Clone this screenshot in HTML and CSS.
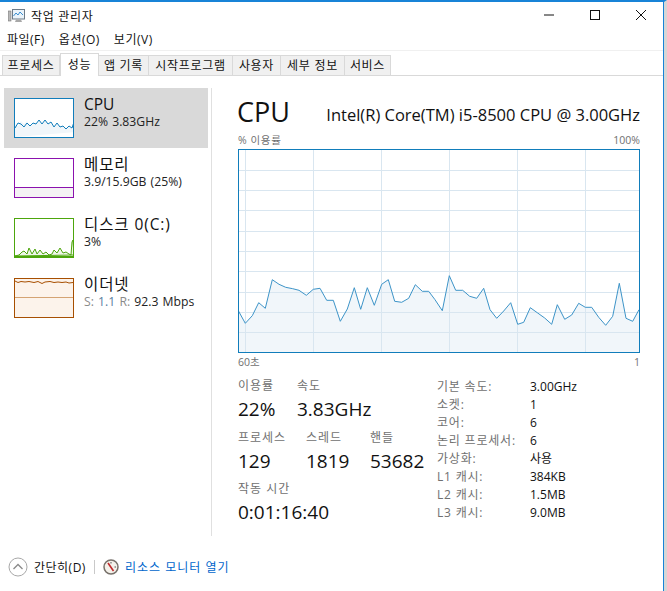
FILE: index.html
```html
<!DOCTYPE html>
<html lang="ko">
<head>
<meta charset="utf-8">
<title>작업 관리자</title>
<link rel="stylesheet" href="styles.css">
</head>
<body>
<div class="window">
  <header class="titlebar">
    <svg class="app-icon" width="17" height="16" viewBox="0 0 17 16">
      <rect x="0.5" y="3" width="2.5" height="10" fill="#b9b9b9" stroke="#777" stroke-width="0.6"/>
      <rect x="4.5" y="1.5" width="12" height="9.5" fill="#eaf3fa" stroke="#6d7b88"/>
      <path d="M5.5 8l2.5-3 2 2 2-3 3 3" fill="none" stroke="#3a8ed0"/>
      <path d="M8 11.5h5l1 2.5H7z" fill="#a8a8a8"/>
    </svg>
    <span class="title">작업 관리자</span>
    <div class="controls">
      <svg class="ctl" width="46" height="30" viewBox="0 0 46 30"><path d="M18 15h10" stroke="#111" fill="none"/></svg>
      <svg class="ctl" width="46" height="30" viewBox="0 0 46 30"><rect x="18.500" y="10.500" width="9" height="9" stroke="#111" fill="none"/></svg>
      <svg class="ctl" width="46" height="30" viewBox="0 0 46 30"><path d="M18 10l10 10M28 10l-10 10" stroke="#111" fill="none"/></svg>
    </div>
  </header>
  <nav class="menu">
    <span>파일(F)</span><span>옵션(O)</span><span>보기(V)</span>
  </nav>
  <div class="tabs">
    <span class="tab t1">프로세스</span>
    <span class="tab active t2">성능</span>
    <span class="tab t3">앱 기록</span>
    <span class="tab t4">시작프로그램</span>
    <span class="tab t5">사용자</span>
    <span class="tab t6">세부 정보</span>
    <span class="tab t7">서비스</span>
  </div>
  <main class="main">
    <aside class="sidebar">
      <div class="item selected">
        <svg class="mini cpu" width="60" height="40" viewBox="1 1 58 38">
          <path d="M1 39V27l3 1 3-5 3 3 3-3 3 5 3-3 3 1 3-4 3 4 3-4 3 4 3-2 3 5 3-4 3 4 3-1 3 3 3-3 3 2 3-8 1 12z" fill="#f1f6fa"/>
          <path d="M1 30l3-5 3 1 3 3 3-4 3 3 3-3 3 1 3-4 3 4 3-4 3 4 3-2 3 5 3-4 3 4 3-1 3 3 3-3 3 2 3-9 1 13" fill="none" stroke="#117dbb"/>
        </svg>
        <div class="info"><div class="name">CPU</div><div class="sub">22% 3.83GHz</div></div>
      </div>
      <div class="item">
        <svg class="mini mem" width="60" height="40" viewBox="1 1 58 38">
          <rect x="1" y="30" width="58" height="9" fill="#f4f2f4"/>
          <path d="M1 29.500h58" stroke="#8b12ae" fill="none"/>
        </svg>
        <div class="info"><div class="name ko">메모리</div><div class="sub">3.9/15.9GB (25%)</div></div>
      </div>
      <div class="item">
        <svg class="mini disk" width="60" height="40" viewBox="1 1 58 38">
          <path d="M1 38l4-1 3-3 2-1 3 3 2-6 3 6 3-5 2 5 3-4 3 4 3-2 3 3 3-1 2-4 3 3 3-5 3 5 3-1 3 2 2 1 1-13 1-2 1 15z" fill="#eef6e8" stroke="#4da60c"/>
          <path d="M1 38.500h58" stroke="#4da60c" fill="none"/>
        </svg>
        <div class="info"><div class="name ko">디스크 0(C:)</div><div class="sub">3%</div></div>
      </div>
      <div class="item">
        <svg class="mini net" width="60" height="40" viewBox="1 1 58 38">
          <rect x="1" y="1" width="58" height="38" fill="#fcf3eb"/>
          <path d="M1 19.500h58" stroke="#d4a373" fill="none"/>
          <path d="M1 3l3 1.500 3-1 4 .5 4-.5 5 1 4-1 4 2 3-1.500 5-.5 4 1 4-.5 4 .5 4-.5 3 1 4-.5" fill="none" stroke="#a74f01"/>
        </svg>
        <div class="info"><div class="name ko">이더넷</div><div class="sub"><span class="dim">S:</span> <span class="blueish">1.1</span> <span class="dim">R:</span> 92.3 Mbps</div></div>
      </div>
    </aside>
    <section class="content">
      <div class="head"><h1>CPU</h1><div class="model">Intel(R) Core(TM) i5-8500 CPU @ 3.00GHz</div></div>
      <div class="axis top"><span class="ko-axis">% 이용률</span><span>100%</span></div>
      <svg class="chart" width="402" height="204" viewBox="238 150 402 204">
        <path d="M239 353V311.700L245.300 324.300 252.300 316.700 258.700 303.700 265.300 309.300 272.300 280.700 279 285.300 285.700 288.300 292.700 289.700 299 291.300 306.300 296.300 313.300 290.300 320 289.300 326.700 301.300 333.300 301.300 340.300 322.300 347.300 310 354.300 288.700 360.700 310.300 367.300 288.700 374.300 306.300 381.700 285.300 388.300 280.700 394.700 302.300 401.700 303.300 408.700 299.300 415.300 285.700 422.300 292.300 428.700 292.300 435 300.700 442.300 311.700 449.300 276.700 455.700 291.300 462.700 291.300 469.700 297.300 476.700 299.300 483.700 289.300 490 310.700 496.700 319.300 503.700 312 510.700 303.700 517.700 325.300 523.700 323.300 530.300 308.700 537.700 314 544.700 319 551.700 325.300 557.300 305.700 564.700 320.300 571.700 316 578.700 304.300 585.300 308.300 591.700 308.300 598.700 318.300 605.700 326.300 612.700 317.300 619.300 284.300 626 319.300 632.700 322.300 639 310.700V353z" fill="#f1f6fa"/>
        <path d="M239 171.500H639M239 191.500H639M239 211.500H639M239 232.500H639M239 252.500H639M239 272.500H639M239 293.500H639M239 313.500H639M239 333.500H639M245.500 151V353M313.500 151V353M381.500 151V353M449.500 151V353M517.500 151V353M585.500 151V353" stroke="#d9e6f0" fill="none"/>
        <path d="M238.300 311.700L245.300 324.300 252.300 316.700 258.700 303.700 265.300 309.300 272.300 280.700 279 285.300 285.700 288.300 292.700 289.700 299 291.300 306.300 296.300 313.300 290.300 320 289.300 326.700 301.300 333.300 301.300 340.300 322.300 347.300 310 354.300 288.700 360.700 310.300 367.300 288.700 374.300 306.300 381.700 285.300 388.300 280.700 394.700 302.300 401.700 303.300 408.700 299.300 415.300 285.700 422.300 292.300 428.700 292.300 435 300.700 442.300 311.700 449.300 276.700 455.700 291.300 462.700 291.300 469.700 297.300 476.700 299.300 483.700 289.300 490 310.700 496.700 319.300 503.700 312 510.700 303.700 517.700 325.300 523.700 323.300 530.300 308.700 537.700 314 544.700 319 551.700 325.300 557.300 305.700 564.700 320.300 571.700 316 578.700 304.300 585.300 308.300 591.700 308.300 598.700 318.300 605.700 326.300 612.700 317.300 619.300 284.300 626 319.300 632.700 322.300 639 310.700" fill="none" stroke="#3d94c8"/>
        <rect x="238.500" y="150.500" width="401" height="203" fill="none" stroke="#117dbb"/>
      </svg>
      <div class="axis bottom"><span>60초</span><span>1</span></div>
      <div class="stats">
        <div class="live">
          <div class="row">
            <div class="stat w59"><div class="label">이용률</div><div class="value">22%</div></div>
            <div class="stat"><div class="label">속도</div><div class="value">3.83GHz</div></div>
          </div>
          <div class="row">
            <div class="stat w68"><div class="label">프로세스</div><div class="value">129</div></div>
            <div class="stat w64"><div class="label">스레드</div><div class="value">1819</div></div>
            <div class="stat"><div class="label">핸들</div><div class="value">53682</div></div>
          </div>
          <div class="row">
            <div class="stat"><div class="label">작동 시간</div><div class="value">0:01:16:40</div></div>
          </div>
        </div>
        <dl class="specs">
          <dt>기본 속도:</dt><dd>3.00GHz</dd>
          <dt>소켓:</dt><dd>1</dd>
          <dt>코어:</dt><dd>6</dd>
          <dt>논리 프로세서:</dt><dd>6</dd>
          <dt>가상화:</dt><dd>사용</dd>
          <dt>L1 캐시:</dt><dd>384KB</dd>
          <dt>L2 캐시:</dt><dd>1.5MB</dd>
          <dt>L3 캐시:</dt><dd>9.0MB</dd>
        </dl>
      </div>
    </section>
  </main>
  <footer class="footer">
    <svg class="chevron" width="20" height="20" viewBox="0 0 20 20">
      <circle cx="10" cy="10" r="9" fill="#fff" stroke="#a8a8a8"/>
      <path d="M5.500 12l4.500-4.500 4.500 4.500" fill="none" stroke="#8a8a8a" stroke-width="1.300"/>
    </svg>
    <span class="less">간단히(D)</span>
    <span class="divider"></span>
    <svg class="gauge" width="16" height="16" viewBox="0 0 16 16">
      <circle cx="8" cy="8" r="7" fill="#f4f1ea" stroke="#77716a" stroke-width="1.500"/>
      <path d="M5 4l5.500 8" stroke="#c0292b" stroke-width="1.600" fill="none"/>
      <path d="M8 3v1.500M13 8h-1.500" stroke="#555" fill="none"/>
    </svg>
    <span class="link">리소스 모니터 열기</span>
  </footer>
</div>
</body>
</html>
```
FILE: styles.css
```css
* { box-sizing: border-box; margin: 0; padding: 0; }
html, body { height: 100%; }
body {
  background: #fff;
  font-family: "Open Sans", "Noto Sans CJK KR", sans-serif;
  color: #111;
  overflow: hidden;
}
.window {
  width: 667px;
  height: 591px;
  display: flex;
  flex-direction: column;
  border-top: 2px solid #1883d7;
  border-right: 3px solid #d6d6d6;
  position: relative;
}
.window::after {
  content: "";
  position: absolute;
  top: -2px;
  bottom: 0;
  right: 0;
  width: 1.5px;
  background: #1883d7;
}
.titlebar { height: 28px; display: flex; align-items: center; padding-left: 8px; }
.app-icon { margin-right: 6px; }
.title { font-size: 12px; letter-spacing: 0.7px; }
.controls { margin-left: auto; display: flex; margin-top: -2px; }
.ctl { display: block; }
.menu { height: 18px; margin-bottom: 2px; display: flex; align-items: center; padding-left: 7px; gap: 14px; font-size: 12px; letter-spacing: 0.5px; }
.tabs { height: 26px; display: flex; align-items: flex-end; padding-left: 2px; border-bottom: 1px solid #d9d9d9; border-top: 1px solid #f0f0f0; }
.tab {
  height: 20px;
  background: #f0f0f0;
  border: 1px solid #d9d9d9;
  border-left: 0;
  border-bottom: 0;
  font-size: 12px;
  letter-spacing: 0.7px;
  line-height: 19px;
  text-align: center;
  color: #111;
}
.t1 { width: 58px; border-left: 1px solid #d9d9d9; }
.t2 { width: 39px; }
.t3 { width: 50px; }
.t4 { width: 84px; }
.t5 { width: 48px; }
.t6 { width: 64px; }
.t7 { width: 46px; }
.tab.active { background: #fff; height: 23px; margin-bottom: -1px; border-left: 1px solid #d9d9d9; line-height: 21px; }
.main { flex: 1; display: flex; min-height: 0; }
.sidebar { width: 212px; margin-top: 12px; margin-bottom: 9px; padding: 0 0 0 4px; display: flex; flex-direction: column; border-right: 1px solid #e0e0e0; background: linear-gradient(#fff 10px, transparent 10px); }
.item { width: 204px; height: 60px; display: flex; padding: 10px 0 0 10px; }
.item.selected { background: #d9d9d9; }
.mini { display: block; flex: none; background: #fff; border: 1px solid; }
.mini.cpu { border-color: #117dbb; }
.mini.mem { border-color: #8b12ae; }
.mini.disk { border-color: #4da60c; }
.mini.net { border-color: #a74f01; }
.info { margin-left: 10px; margin-top: -4px; }
.name { font-size: 15.500px; line-height: 20px; height: 20px; overflow: hidden; }
.name.ko { letter-spacing: 0.9px; }
.sub { font-size: 12.200px; word-spacing: 1px; line-height: 16px; color: #222; }
.dim { color: #8a8a8a; }
.blueish { color: #5a7ea0; }
.content { flex: 1; padding: 0 0 0 26px; min-width: 0; }
.head { display: flex; align-items: flex-end; justify-content: space-between; width: 402px; height: 43px; margin-top: 11px; }
h1 { font-size: 27px; font-weight: 400; line-height: 36px; margin-left: -1px; }
.model { font-size: 16.500px; line-height: 22px; padding-bottom: 4px; white-space: nowrap; }
.axis { display: flex; justify-content: space-between; width: 402px; font-size: 10.500px; color: #707070; line-height: 14px; }
.ko-axis { letter-spacing: 0.6px; }
.axis.top { margin-top: 3px; margin-bottom: 2px; }
.axis.bottom { margin-top: 2px; }
.chart { display: block; }
.stats { display: flex; margin-top: 10px; }
.live { width: 199px; flex: none; }
.row { display: flex; height: 51.500px; }
.stat { flex: none; }
.w59 { width: 59px; }
.w68 { width: 68px; }
.w64 { width: 64px; }
.label { font-size: 12px; letter-spacing: 1px; line-height: 14px; color: #707070; }
.value { font-size: 19px; line-height: 24px; margin-top: 4px; white-space: nowrap; }
.specs { display: grid; grid-template-columns: 93px auto; grid-auto-rows: 18px; font-size: 12px; line-height: 18px; margin-top: -1px; }
dt { color: #707070; white-space: nowrap; letter-spacing: 0.8px; }
dd { color: #111; }
.footer { height: 44px; display: flex; align-items: center; padding-left: 8px; margin-bottom: 2px; }
.chevron { margin-right: 6px; }
.less { font-size: 12px; letter-spacing: 0.5px; }
.divider { width: 1px; height: 14px; background: #c9c9c9; margin: 0 8px; }
.gauge { margin-right: 6px; }
.link { font-size: 12px; letter-spacing: 1px; color: #0066cc; }
```
